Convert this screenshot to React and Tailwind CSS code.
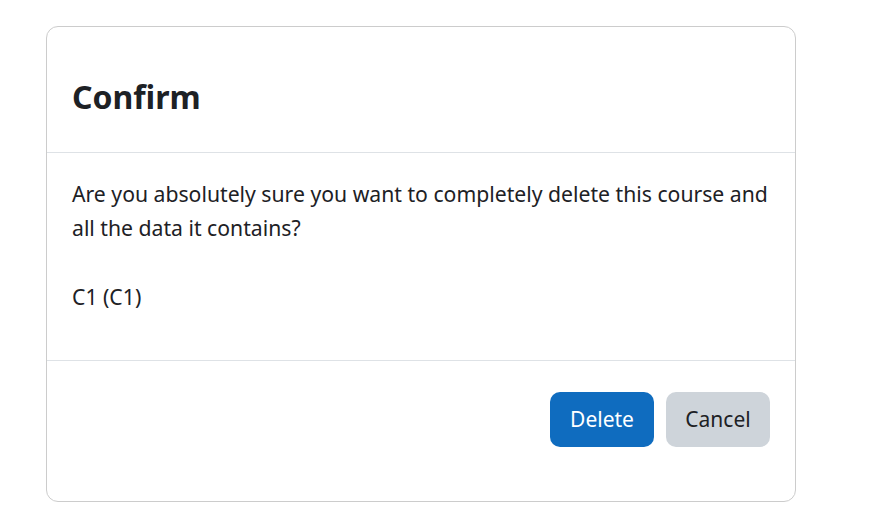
import React from 'react';

const App = () => {
    return (
        <div
            className="min-h-[529px] bg-white pl-[46px] pt-[26px] text-[#1d2125]"
            style={{ fontFamily: '"Noto Sans", "Open Sans", sans-serif' }}
        >
            <div className="w-[750px] rounded-[12px] border border-[#cccccc] bg-white">
                <div className="flex h-[126px] items-center border-b border-[#dee2e6] px-[25px] pt-[14px]">
                    <h5 className="text-[32px] font-bold leading-none">Confirm</h5>
                </div>
                <div className="h-[208px] border-b border-[#dee2e6] px-[25px] pt-[24px] text-[21.2px] leading-[34px]">
                    <p>
                        Are you absolutely sure you want to completely delete this course and all the data it
                        contains?
                    </p>
                    <p className="mt-[35px]">C1 (C1)</p>
                </div>
                <div className="flex h-[140px] items-start justify-end gap-[12px] px-[25px] pt-[31px]">
                    <button className="h-[55px] w-[104px] rounded-[10px] bg-[#0f6cbf] text-[21px] text-white">
                        Delete
                    </button>
                    <button className="h-[55px] w-[104px] rounded-[10px] bg-[#ced4da] text-[21px] text-[#1d2125]">
                        Cancel
                    </button>
                </div>
            </div>
        </div>
    );
};

export default App;
